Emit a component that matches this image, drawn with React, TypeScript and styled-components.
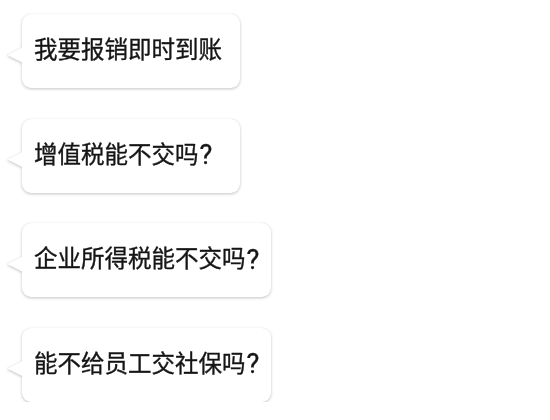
import React from "react";
import styled, { createGlobalStyle } from "styled-components";

const GlobalStyle = createGlobalStyle`
  body {
    margin: 0;
    background: #ffffff;
    font-family: Roboto, "Noto Sans CJK SC", sans-serif;
  }
`;

const StyledList = styled.div`
  display: flex;
  flex-direction: column;
  align-items: flex-start;
  gap: 30.5px;
  padding: 14px 0 0 22px;
`;

const StyledBubble = styled.div`
  position: relative;
  display: flex;
  align-items: center;
  box-sizing: border-box;
  height: 74px;
  min-width: 218px;
  padding: 0 12px 0 12px;
  background: #ffffff;
  border-radius: 9px;
  filter: drop-shadow(0 1px 1.5px rgba(0, 0, 0, 0.22)) drop-shadow(0 0 0.5px rgba(0, 0, 0, 0.12));
  color: #151515;
  font-size: 23.5px;
  line-height: 1;
  white-space: nowrap;
  -webkit-text-stroke: 0.35px #151515;
  &::before {
    content: "";
    position: absolute;
    left: -15px;
    top: 33px;
    width: 16px;
    height: 16px;
    background: #ffffff;
    clip-path: polygon(0 50%, 100% 0, 100% 100%);
  }
`;

const StyledMark = styled.span`
  font-size: 27px;
  margin-left: 1px;
`;

const questions = [
  { text: "我要报销即时到账", ask: false },
  { text: "增值税能不交吗", ask: true },
  { text: "企业所得税能不交吗", ask: true },
  { text: "能不给员工交社保吗", ask: true },
];

const App = () => {
  return (
    <>
      <GlobalStyle />
      <StyledList>
        {questions.map((q) => (
          <StyledBubble key={q.text}>
            {q.text}
            {q.ask && <StyledMark>?</StyledMark>}
          </StyledBubble>
        ))}
      </StyledList>
    </>
  );
};

export default App;
